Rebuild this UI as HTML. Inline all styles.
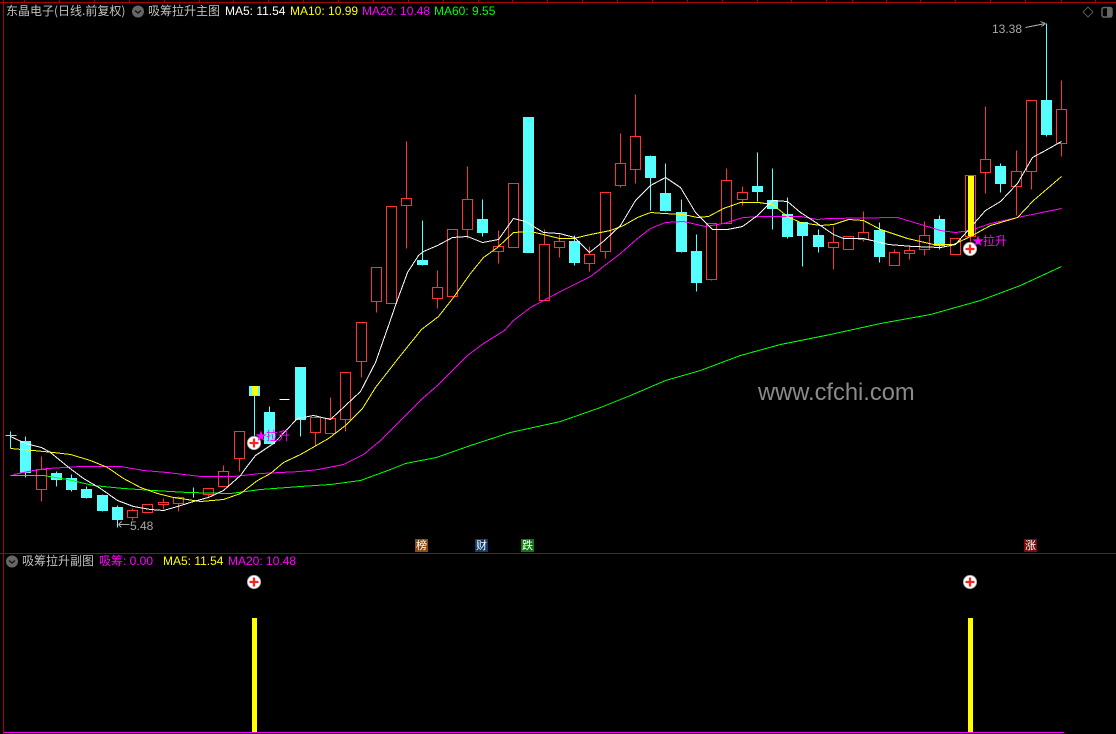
<!DOCTYPE html>
<html lang="zh"><head><meta charset="utf-8"><title>吸筹拉升</title>
<style>
html,body{margin:0;padding:0;background:#000;width:1116px;height:734px;overflow:hidden}
#w{position:relative;width:1116px;height:734px;background:#000;overflow:hidden}
svg{position:absolute;left:0;top:0}
.t{position:absolute;white-space:nowrap;font:12px/14px "Liberation Sans","Noto Sans CJK SC",sans-serif;color:#c0c0c0}
.c{font-family:"WenQuanYi Zen Hei","Noto Sans CJK SC",sans-serif;font-size:12px}
.m{position:absolute;width:13px;height:13px;color:#fff;font:11px/13px "WenQuanYi Zen Hei","Noto Sans CJK SC",sans-serif;text-align:center}
</style></head><body><div id="w">
<svg width="1116" height="734" viewBox="0 0 1116 734" shape-rendering="crispEdges">
<g fill="none" stroke="#a80000">
<path d="M0 2.5H1116M3.5 0V734M0 553.5H1116M24.5 0V2M59.5 0V2M94.5 0V2M129.5 0V2M164.5 0V2M199.5 0V2M233.5 0V2M268.5 0V2M303.5 0V2M338.5 0V2M373.5 0V2M408.5 0V2M443.5 0V2M478.5 0V2M512.5 0V2M547.5 0V2M582.5 0V2M617.5 0V2M652.5 0V2M687.5 0V2M722.5 0V2M757.5 0V2M791.5 0V2M826.5 0V2M852.5 0V2M886.5 0V2M920.5 0V2M955.5 0V2M990.5 0V2M1025.5 0V2M1061.5 0V2M1095.5 0V2"/>
</g>
<g transform="translate(.5 .5)">
<path fill="none" stroke="#ff3232" d="M36 469h10v20h-10zM41 456V469M41 489V501
M127 510h10v7h-10zM132 508V510M132 517V520
M142 504h10v8h-10z
M158 502h10v2h-10zM163 498V502M163 504V509
M173 497h10v6h-10zM178 496V497M178 503V511
M203 488h10v6h-10zM208 494V497
M218 471h10v15h-10zM223 465V471
M234 431h10v27h-10zM239 458V471
M310 417h10v15h-10zM315 432V445
M325 418h10v15h-10zM330 397V418
M340 372h10v47h-10zM345 419V431
M356 322h10v39h-10zM361 361V377
M371 267h10v34h-10zM376 301V312
M386 206h10v97h-10z
M401 198h10v7h-10zM406 141V198M406 205V248
M432 287h10v11h-10zM437 270V287M437 298V308
M447 229h10v67h-10z
M462 199h10v30h-10zM467 166V199M467 229V238
M493 246h10v5h-10zM498 230V246M498 251V263
M508 183h10v64h-10z
M539 244h10v56h-10zM544 229V244
M554 241h10v6h-10zM559 234V241M559 247V257
M584 254h10v9h-10zM589 246V254M589 263V271
M600 192h10v59h-10zM605 251V258
M615 163h10v22h-10zM620 133V163M620 185V187
M630 136h10v33h-10zM635 94V136M635 169V183
M706 223h10v56h-10zM711 279V280
M721 180h10v43h-10zM726 168V180
M737 192h10v7h-10zM742 186V192M742 199V205
M828 242h10v5h-10zM833 226V242M833 247V269
M843 236h10v13h-10z
M858 232h10v7h-10zM863 211V232M863 239V241
M889 252h10v13h-10zM894 249V252
M904 250h10v3h-10zM909 246V250M909 253V259
M919 235h10v14h-10zM924 221V235M924 249V255
M950 238h10v16h-10z
M965 175h10v61h-10zM970 236V241
M980 159h10v13h-10zM985 106V159M985 172V193
M1011 171h10v15h-10zM1016 150V171M1016 186V215
M1026 100h10v71h-10zM1031 171V189
M1056 109h10v34h-10zM1061 80V109M1061 143V156"/>
<path fill="#55ffff" stroke="#55ffff" d="M5 435H16M10 431V448
M20 441h10v31h-10zM25 436V477
M51 473h10v6h-10zM56 471V486
M66 478h10v11h-10zM71 474V491
M81 489h10v8h-10zM86 486V498
M97 495h10v15h-10zM102 494V511
M112 507h10v12h-10zM117 505V527
M188 492H198M193 487V497
M249 386h10v9h-10zM254 395V436
M264 412h10v31h-10zM269 406V412
M295 367h10v52h-10zM300 419V436
M417 260h10v4h-10zM422 220V265
M477 219h10v13h-10zM482 199V236
M523 117h10v135h-10z
M569 241h10v21h-10zM574 235V265
M645 156h10v21h-10zM650 155V210
M660 193h10v17h-10zM665 163V211
M676 212h10v39h-10zM681 199V252
M691 251h10v31h-10zM696 234V291
M752 186h10v5h-10zM757 152V201
M767 200h10v8h-10zM772 168V229
M782 214h10v22h-10zM787 197V238
M797 222h10v13h-10zM802 222V266
M813 235h10v11h-10zM818 229V252
M874 230h10v26h-10zM879 222V262
M934 219h10v26h-10zM939 215V249
M995 166h10v17h-10zM1000 163V192
M1041 100h10v34h-10zM1046 23V136"/>
<path fill="none" stroke="#fff" d="M279 399H289"/>
<polyline fill="none" stroke="#00ff00" points="10,475 43,475 67,479 93,485 123,488 153,490 187,492 230,493 260,489 300,486 330,484 360,480 390,469 405,463 436,457 470,445 510,432 560,421 600,407 630,395 665,380 700,370 740,355 780,344 830,334 880,323 930,314 980,300 1020,285 1061,266"/>
<polyline fill="none" stroke="#ff00ff" points="13,474 33,470 47,468 80,466 120,466 143,470 167,472 200,476 233,476 260,473 300,471 318,469 343,464 363,454 380,440 400,420 422,398 437,385 452,370 467,355 483,343 504,330 513,320 530,307 545,299 558,292 590,276 620,253 637,238 650,228 665,222 683,221 705,226 723,223 743,217 763,216 800,216 817,219 827,218 897,217 917,223 940,230 955,232 970,230 990,223 1017,217 1061,208"/>
<polyline fill="none" stroke="#ffff00" points="10,448 33,450 53,452 70,454 90,460 107,467 123,478 140,487 157,493 173,497 200,501 223,499 240,493 257,480 270,473 283,462 300,454 328,438 345,425 362,408 375,387 400,355 421,329 438,316 453,297 470,273 483,257 497,247 513,232 530,231 543,234 559,238 573,238 590,234 610,230 623,225 637,217 650,212 663,213 683,214 697,217 708,216 723,208 740,202 758,202 772,204 787,216 800,222 820,225 833,224 848,219 863,220 880,229 907,238 933,244 953,244 970,236 990,225 1017,217 1033,200 1061,176"/>
<polyline fill="none" stroke="#fff" points="10,436 25,443 41,447 50,452 67,466 83,478 100,488 117,500 133,506 150,509 163,510 177,506 193,501 208,497 223,490 240,475 245,468 255,455 273,443 297,418 313,415 330,419 360,391 375,362 387,328 396,302 407,272 418,255 423,251 437,245 452,237 467,236 482,242 498,239 513,218 525,221 543,232 559,233 574,237 589,252 604,240 620,225 635,200 650,185 665,177 680,187 695,212 712,229 727,229 742,226 757,215 772,200 787,201 800,212 817,223 833,234 843,238 863,238 888,244 913,246 940,247 955,244 970,227 985,210 1000,201 1017,183 1032,157 1045,150 1061,141"/>
<path fill="none" stroke="#a8a8a8" d="M118 524H129M118 524L121 521M118 524L121 527M1025 27L1045 23M1045 23L1040 21M1045 23L1041 26"/>
</g>
<rect x="252" y="386" width="6" height="9" fill="#ff0"/>
<rect x="968" y="176" width="6" height="60" fill="#ff0"/>
<rect x="252" y="618" width="5" height="115" fill="#ff0"/>
<rect x="968" y="618" width="5" height="115" fill="#ff0"/>
<rect x="4" y="732" width="1060" height="1" fill="#ff00ff"/>
<g shape-rendering="auto">
<circle cx="254" cy="443" r="6.700" fill="#fff" stroke="#999" stroke-width=".8"/><path d="M249.500 443H258.500M254 438.500V447.500" stroke="#ff2020" stroke-width="2.200"/>
<circle cx="970" cy="249" r="6.700" fill="#fff" stroke="#999" stroke-width=".8"/><path d="M965.500 249H974.500M970 244.500V253.500" stroke="#ff2020" stroke-width="2.200"/>
<circle cx="254" cy="582" r="6.700" fill="#fff" stroke="#999" stroke-width=".8"/><path d="M249.500 582H258.500M254 577.500V586.500" stroke="#ff2020" stroke-width="2.200"/>
<circle cx="970" cy="582" r="6.700" fill="#fff" stroke="#999" stroke-width=".8"/><path d="M965.500 582H974.500M970 577.500V586.500" stroke="#ff2020" stroke-width="2.200"/>
<circle cx="138" cy="11.500" r="6" fill="#666"/><path d="M135 10.500L138 13L141 10.500" fill="none" stroke="#111" stroke-width="1.300"/>
<circle cx="12" cy="561.500" r="6" fill="#666"/><path d="M9 560.500L12 563L15 560.500" fill="none" stroke="#111" stroke-width="1.300"/>
<path d="M1088 7L1093 12L1088 17L1083 12Z" fill="none" stroke="#555"/>
<rect x="1102" y="7.500" width="10" height="9.500" rx="2" fill="none" stroke="#666" stroke-width="1.500"/><rect x="1107" y="8" width="5" height="9" fill="#666"/>
</g>
</svg>
<div class="t c" style="left:6px;top:4px">东晶电子(日线.前复权)</div>
<div class="t c" style="left:148px;top:4px">吸筹拉升主图</div>
<div class="t" style="left:225px;top:4px;color:#fff">MA5: 11.54</div>
<div class="t" style="left:290px;top:4px;color:#ff0">MA10: 10.99</div>
<div class="t" style="left:362px;top:4px;color:#f0f">MA20: 10.48</div>
<div class="t" style="left:434px;top:4px;color:#0f0">MA60: 9.55</div>
<div class="t c" style="left:22px;top:554px">吸筹拉升副图</div>
<div class="t" style="left:99px;top:554px;color:#f0f">吸筹: 0.00</div>
<div class="t" style="left:163px;top:554px;color:#ff0">MA5: 11.54</div>
<div class="t" style="left:228px;top:554px;color:#f0f">MA20: 10.48</div>
<div class="t" style="left:992px;top:22px;color:#a8a8a8">13.38</div>
<div class="t" style="left:130px;top:519px;color:#a8a8a8">5.48</div>
<div class="t" style="left:255px;top:429px;color:#f0f;letter-spacing:-1px">★<span class="c" style="letter-spacing:0">拉升</span></div>
<div class="t" style="left:972px;top:234px;color:#f0f;letter-spacing:-1px">★<span class="c" style="letter-spacing:0">拉升</span></div>
<div class="t" style="left:758px;top:380px;font-size:23.700px;line-height:26px;color:#8a8a8a">www.cfchi.com</div>
<div class="m" style="left:415px;top:539px;background:#8a4a10">榜</div>
<div class="m" style="left:475px;top:539px;background:#103a6a">财</div>
<div class="m" style="left:521px;top:539px;background:#0a7a0a">跌</div>
<div class="m" style="left:1024px;top:539px;background:#7a0a0a">涨</div>
</div></body></html>
